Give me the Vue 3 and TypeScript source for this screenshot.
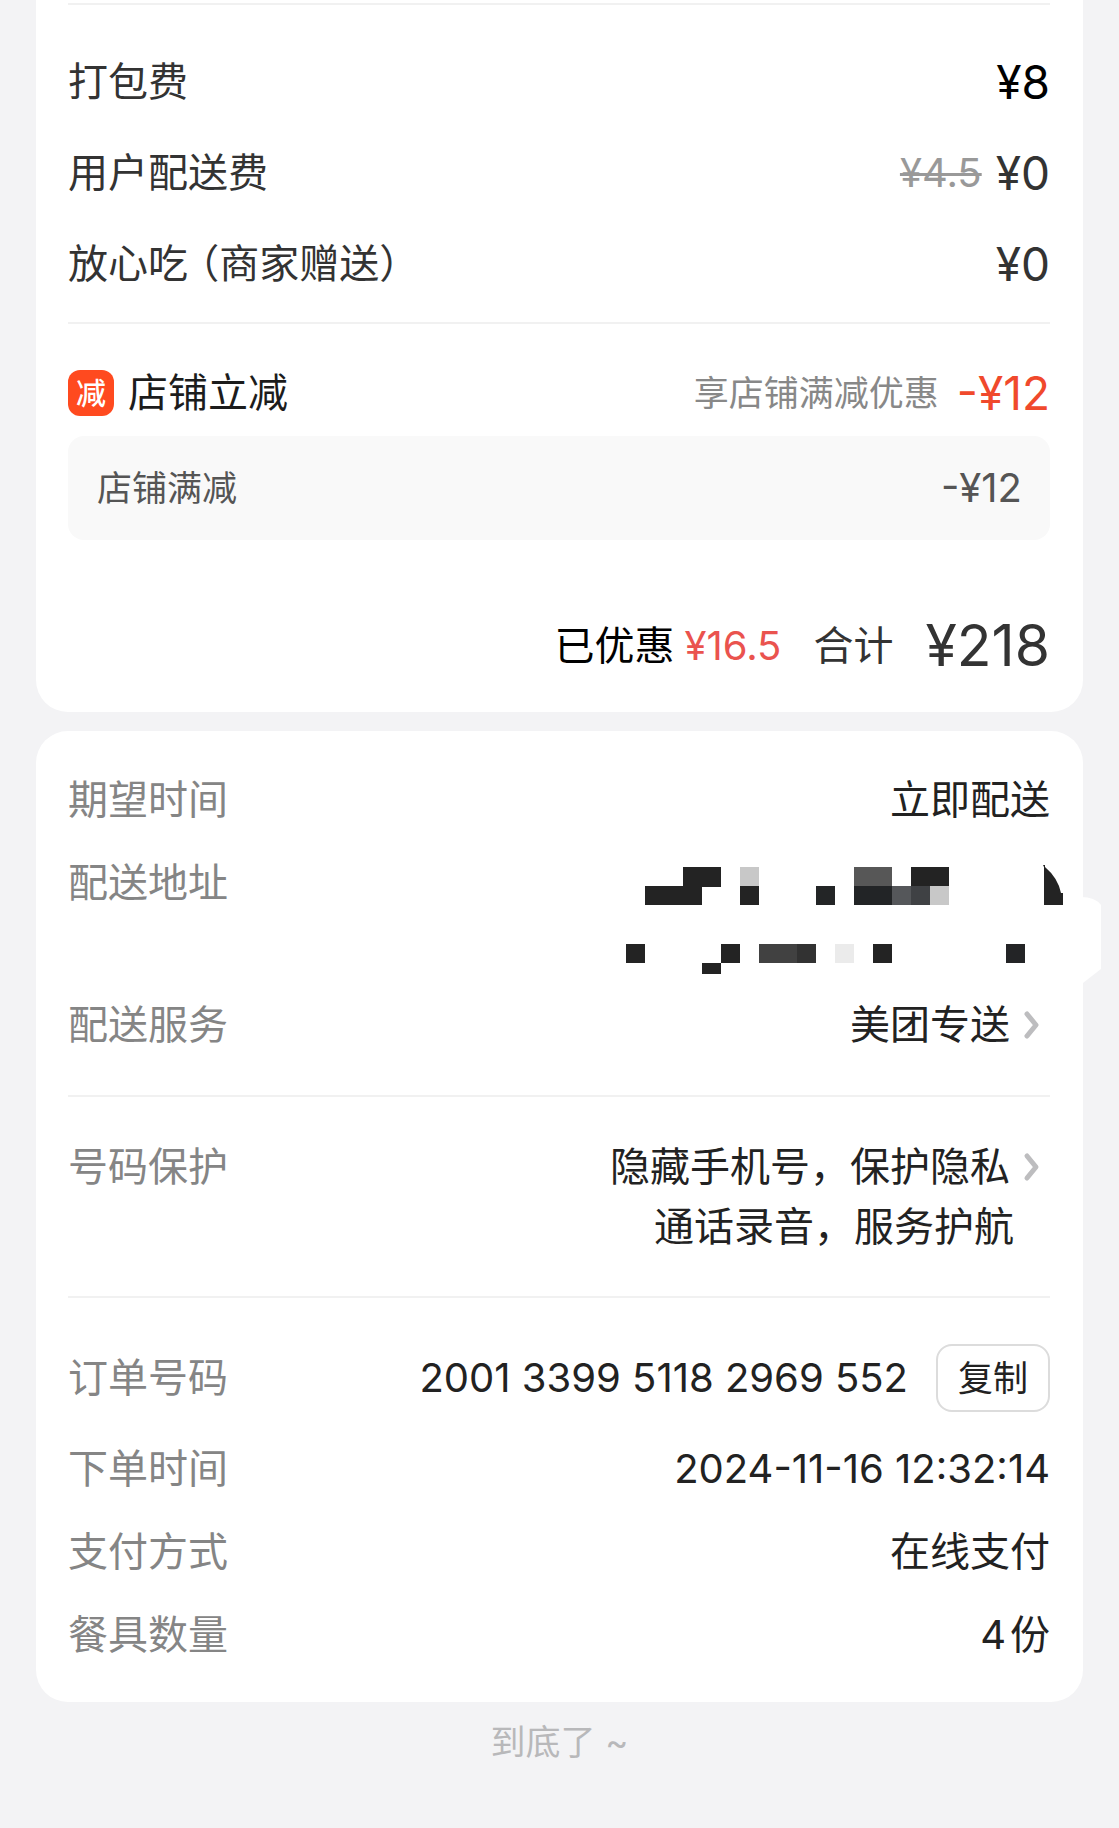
<script setup lang="ts">
interface Fee {
  name: string
  price: string
  original?: string
  strong?: boolean
}

interface Block {
  x: number
  y: number
  w: number
  h: number
  fill: string
}

const fees: Fee[] = [
  { name: '打包费', price: '¥8', strong: true },
  { name: '用户配送费', price: '¥0', original: '¥4.5' },
  { name: '放心吃 （商家赠送）', price: '¥0' },
]

const orderNumber = '2001 3399 5118 2969 552'

// Censor blocks that hide the address
const blocks: Block[] = [
  { x: 58, y: 24, w: 38, h: 20, fill: '#232323' },
  { x: 115, y: 24, w: 19, h: 20, fill: '#c8c8c8' },
  { x: 229, y: 24, w: 38, h: 20, fill: '#575757' },
  { x: 286, y: 24, w: 38, h: 20, fill: '#232323' },
  { x: 20, y: 43, w: 57, h: 19, fill: '#232323' },
  { x: 115, y: 43, w: 19, h: 19, fill: '#232323' },
  { x: 191, y: 43, w: 19, h: 19, fill: '#232526' },
  { x: 229, y: 43, w: 38, h: 19, fill: '#222426' },
  { x: 267, y: 43, w: 19, h: 19, fill: '#55575a' },
  { x: 286, y: 43, w: 19, h: 19, fill: '#3f4144' },
  { x: 305, y: 43, w: 19, h: 19, fill: '#c8c8c8' },
  { x: 1, y: 101, w: 19, h: 19, fill: '#232323' },
  { x: 96, y: 101, w: 19, h: 19, fill: '#232323' },
  { x: 134, y: 101, w: 38, h: 19, fill: '#414141' },
  { x: 172, y: 101, w: 19, h: 19, fill: '#323232' },
  { x: 210, y: 101, w: 19, h: 19, fill: '#ebebeb' },
  { x: 248, y: 101, w: 19, h: 19, fill: '#232323' },
  { x: 381, y: 101, w: 19, h: 19, fill: '#232426' },
  { x: 77, y: 120, w: 19, h: 11, fill: '#232323' },
]

function copyOrderNumber(): void {
  void navigator.clipboard?.writeText(orderNumber.replace(/ /g, ''))
}
</script>

<template>
  <main class="page" lang="zh-CN">
    <section class="card bill">
      <div class="divider"></div>
      <div class="fees">
        <div v-for="fee in fees" :key="fee.name" class="row fee">
          <span class="fee-name">{{ fee.name }}</span>
          <span class="fee-value">
            <s v-if="fee.original" class="original">{{ fee.original }}</s>
            <span class="price" :class="{ strong: fee.strong }">{{ fee.price }}</span>
          </span>
        </div>
      </div>
      <div class="divider"></div>
      <div class="row promo">
        <span class="promo-name"><span class="badge">减</span>店铺立减</span>
        <span class="promo-value">
          <span class="note">享店铺满减优惠</span>
          <span class="price red">-¥12</span>
        </span>
      </div>
      <div class="row promo-detail">
        <span>店铺满减</span>
        <span class="amount">-¥12</span>
      </div>
      <div class="total">
        <span class="saved">已优惠</span>
        <span class="saved-amount">¥16.5</span>
        <span class="sum-label">合计</span>
        <span class="sum">¥218</span>
      </div>
    </section>

    <section class="card details">
      <div class="row info">
        <span class="label">期望时间</span>
        <span>立即配送</span>
      </div>
      <div class="row info address">
        <span class="label">配送地址</span>
        <svg class="mosaic" width="476" height="142" viewBox="0 -2 476 142" aria-hidden="true">
          <path d="M456 54 Q470 54 476 62 V126 L458 140 Z" fill="#fff" />
          <rect
            v-for="(b, i) in blocks"
            :key="i"
            :x="b.x"
            :y="b.y"
            :width="b.w"
            :height="b.h"
            :fill="b.fill"
            shape-rendering="crispEdges"
          />
          <path d="M418 22 H420 V24 Q433 35 436 50 H438 V62 H419 V24 Z" fill="#232323" />
        </svg>
      </div>
      <div class="row info">
        <span class="label">配送服务</span>
        <a class="link" href="#service">
          美团专送
          <svg class="chevron" width="20" height="32" viewBox="0 0 20 32" aria-hidden="true">
            <path d="M5 5 L14 16 L5 27" />
          </svg>
        </a>
      </div>
      <div class="divider"></div>
      <div class="row privacy">
        <span class="label">号码保护</span>
        <div class="privacy-value">
          <a class="link" href="#privacy">
            隐藏手机号，保护隐私
            <svg class="chevron" width="20" height="32" viewBox="0 0 20 32" aria-hidden="true">
              <path d="M5 5 L14 16 L5 27" />
            </svg>
          </a>
          <span class="second">通话录音，服务护航</span>
        </div>
      </div>
      <div class="divider"></div>
      <div class="row order">
        <span class="label">订单号码</span>
        <span class="order-value">
          <span>{{ orderNumber }}</span>
          <button class="copy" type="button" @click="copyOrderNumber">复制</button>
        </span>
      </div>
      <div class="row info">
        <span class="label">下单时间</span>
        <span>2024-11-16 12:32:14</span>
      </div>
      <div class="row info">
        <span class="label">支付方式</span>
        <span>在线支付</span>
      </div>
      <div class="row info">
        <span class="label">餐具数量</span>
        <span class="count">4<span>份</span></span>
      </div>
    </section>

    <p class="end">到底了 ~</p>
  </main>
</template>

<style>
body {
  margin: 0;
  background: #f3f3f5;
}
</style>

<style scoped>
.page {
  display: flex;
  flex-direction: column;
  padding: 0 36px 48px;
  font-family: Inter, "Noto Sans CJK SC", sans-serif;
  font-size: 40px;
  line-height: 60px;
  color: #222;
  white-space: nowrap;
}

.card {
  padding: 0 33px 0 32px;
  background: #fff;
}

.bill {
  padding-top: 3px;
  padding-bottom: 26px;
  border-radius: 0 0 32px 32px;
  color: #333;
}

.details {
  margin-top: 19px;
  padding-top: 27px;
  padding-bottom: 26px;
  border-radius: 32px;
}

.divider {
  height: 2px;
  background: #f1f1f1;
}

.row {
  display: flex;
  align-items: center;
  justify-content: space-between;
}

.fees {
  padding: 31px 0 13px;
}

.fee {
  height: 91px;
}

.fee-name {
  font-feature-settings: "halt";
}

.fee-value {
  display: flex;
  align-items: center;
  gap: 14px;
}

.original {
  font-size: 40px;
  color: #999;
  text-decoration-thickness: 3px;
}

.price {
  font-size: 46px;
}

.strong {
  color: #000;
}

.red {
  color: #f0492c;
}

.promo {
  height: 86px;
  padding-top: 26px;
}

.promo-name {
  display: flex;
  align-items: center;
  gap: 14px;
  color: #1c1c1c;
}

.badge {
  width: 46px;
  height: 46px;
  border-radius: 12px;
  background: #ff4a1f;
  color: #fff;
  font-size: 30px;
  font-weight: 500;
  line-height: 46px;
  text-align: center;
}

.promo-value {
  display: flex;
  align-items: center;
  gap: 18px;
}

.note {
  font-size: 35px;
  color: #888;
}

.promo-detail {
  height: 104px;
  padding: 0 28px 0 29px;
  border-radius: 16px;
  background: #f9f9f9;
  font-size: 35px;
  color: #555;
}

.amount {
  font-size: 40px;
}

.total {
  display: flex;
  align-items: center;
  justify-content: flex-end;
  height: 80px;
  padding-top: 66px;
}

.saved {
  color: #000;
}

.saved-amount {
  margin-left: 10px;
  font-size: 40px;
  color: #ea534e;
}

.sum-label {
  margin-left: 32px;
}

.sum {
  margin-left: 32px;
  font-size: 57px;
}

.info {
  height: 83px;
}

.label {
  color: #858585;
}

.address {
  height: 142px;
  align-items: flex-start;
  line-height: 83px;
}

.mosaic {
  flex: none;
  margin-right: -51px;
}

.link {
  display: flex;
  align-items: center;
  gap: 12px;
  padding-right: 8px;
  color: inherit;
  text-decoration: none;
}

.chevron {
  fill: none;
  stroke: #bdbdbf;
  stroke-width: 5;
  stroke-linecap: round;
  stroke-linejoin: round;
}

.info + .divider {
  margin-top: 29px;
}

.privacy {
  align-items: flex-start;
  padding: 40px 0 39px;
}

.privacy-value {
  display: flex;
  flex-direction: column;
  align-items: flex-end;
}

.second {
  padding-right: 36px;
}

.order {
  height: 98px;
  padding-top: 31px;
}

.order-value {
  display: flex;
  align-items: center;
  gap: 28px;
}

.copy {
  width: 114px;
  height: 68px;
  padding: 0;
  border: 2px solid #dcdcdc;
  border-radius: 16px;
  background: #fff;
  color: #222;
  font-family: inherit;
  font-size: 35px;
  line-height: 60px;
}

.count span {
  margin-left: 4px;
}

.end {
  margin: 10px 0 0;
  font-size: 35px;
  text-align: center;
  color: #b8b8ba;
}
</style>
